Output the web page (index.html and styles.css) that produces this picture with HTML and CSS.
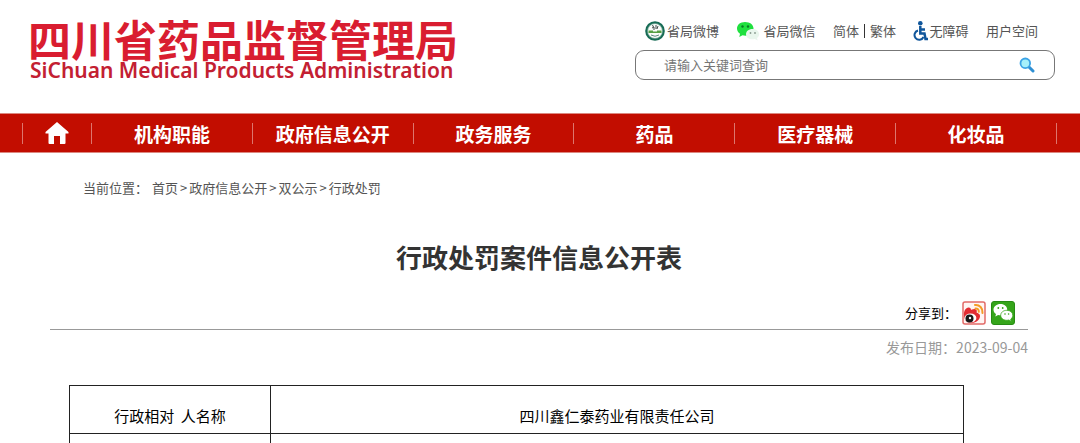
FILE: index.html
```html
<!DOCTYPE html>
<html lang="zh-CN">
<head>
<meta charset="utf-8">
<meta name="viewport" content="width=device-width, initial-scale=1">
<title>行政处罚案件信息公开表</title>
<link rel="stylesheet" href="styles.css">
</head>
<body>
<header class="header">
  <a class="brand" href="#">
    <span class="brand-cn">四川省药品监督管理局</span>
    <span class="brand-en">SiChuan Medical Products Administration</span>
  </a>
  <div class="tools">
    <div class="links">
      <a class="link weibo" href="#">
        <svg width="20" height="20" viewBox="0 0 20 20" aria-hidden="true"><circle cx="10" cy="10" r="9.8" fill="#176b55"/><circle cx="10" cy="10" r="7.8" fill="#86b5a5"/><circle cx="10" cy="10" r="7" fill="#fbfdfb"/><path d="M7 4.500l2 1M7 7l2-1v3M11 4v4M13 5l-1 3" stroke="#414b4a" fill="none"/><path d="M3.500 9.500h4.500v1h4v-1h4.500v2.500H3.500z" fill="#56a044"/><path d="M6 14q4 2.500 8 0" stroke="#5e8a80" fill="none"/></svg>
        <span>省局微博</span>
      </a>
      <a class="link wechat" href="#">
        <svg width="24" height="20" viewBox="0 0 24 20" aria-hidden="true"><path d="M9 1C4.300 1 1 3.800 1 7.500c0 2.300 1.200 4 3 5.200L3.300 16l3.200-1.800q2.500.7 4.500.3c3.800-.7 6.500-3.600 6.500-7C17.500 3.800 14 1 9 1z" fill="#1fe03f"/><path d="M16.500 8c-3.900 0-6.500 2.300-6.500 5.200s2.800 5.100 6.500 5.100q1.200 0 2.400-.4l2.800 1.500-.7-2.500c1.400-1 2.200-2.300 2.200-3.700 0-2.900-2.900-5.200-6.700-5.200z" fill="#e9f6ed"/><circle cx="6.500" cy="5.500" r="1.200" fill="#087a22"/><circle cx="12" cy="5.500" r="1.200" fill="#087a22"/><circle cx="14.500" cy="12" r=".9" fill="#8a9b90"/><circle cx="19" cy="12" r=".9" fill="#8a9b90"/></svg>
        <span>省局微信</span>
      </a>
      <span class="scripts"><a href="#">简体</a><span class="bar"></span><a href="#">繁体</a></span>
      <a class="link access" href="#">
        <svg width="15" height="20" viewBox="0 0 15 20" aria-hidden="true"><circle cx="7.300" cy="2.300" r="2.300" fill="#10569b"/><path d="M7.300 5v7.500h4.200l1 5.500H15M7.500 8.500h4.500" fill="none" stroke="#10569b" stroke-width="2.500"/><path d="M5 9.500a4.700 4.700 0 1 0 5.500 6.500" fill="none" stroke="#10569b" stroke-width="2"/></svg>
        <span>无障碍</span>
      </a>
      <a class="link" href="#">用户空间</a>
    </div>
    <form class="search">
      <input class="search-input" type="text" placeholder="请输入关键词查询" aria-label="请输入关键词查询">
      <button class="search-button" type="button" aria-label="查询">
        <svg width="16" height="16" viewBox="0 0 16 16" aria-hidden="true"><path d="M9.500 9.500l4.500 4.500" stroke="#2e8fd3" stroke-width="3" stroke-linecap="round"/><circle cx="6.300" cy="6.300" r="4.800" fill="#a5f0fa" stroke="#3aa3e6" stroke-width="1.800"/></svg>
      </button>
    </form>
  </div>
</header>

<nav class="nav">
  <ul class="nav-list">
    <li class="nav-home"><a href="#" aria-label="首页"><svg width="24" height="22" viewBox="0 0 24 22" aria-hidden="true"><path d="M12 0L.5 10v1.500h3V21q0 1 1 1H9v-8h6v8h4.500q1 0 1-1v-9.500h3V10z" fill="#fff"/></svg></a></li>
    <li><a href="#">机构职能</a></li>
    <li><a href="#">政府信息公开</a></li>
    <li><a href="#">政务服务</a></li>
    <li><a href="#">药品</a></li>
    <li><a href="#">医疗器械</a></li>
    <li><a href="#">化妆品</a></li>
  </ul>
</nav>

<main class="main">
  <div class="crumbs">
    <span class="crumbs-label">当前位置：</span>
    <a href="#">首页</a><span>&gt;</span><a href="#">政府信息公开</a><span>&gt;</span><a href="#">双公示</a><span>&gt;</span><a href="#">行政处罚</a>
  </div>
  <h1 class="title">行政处罚案件信息公开表</h1>
  <div class="share">
    <span>分享到：</span>
    <a href="#" aria-label="微博"><svg width="24" height="24" viewBox="0 0 24 24" aria-hidden="true"><rect x="1" y="1" width="22" height="22" rx="2" fill="#fff5f3" stroke="#e26b68" stroke-width="1.500"/><path d="M2 14c-.5-4 2-8 5-7.500 2 .3 2 2.500 2 2.500s4-2 5.500 0c.7 1 0 2.500 0 2.500s4 1 3.500 4C17.500 19.500 13.500 22 9 22c-4 0-7-3-7-8z" fill="#e22b31"/><ellipse cx="8.500" cy="17" rx="5.900" ry="4.500" fill="#fff"/><circle cx="7.500" cy="17.500" r="4" fill="#171717"/><circle cx="8" cy="17" r="1.200" fill="#fff"/><path d="M13 4c4.500-.5 8 3 7.500 8M13.500 7.500c2-.2 3.500 1.300 3.300 3.300" fill="none" stroke="#f49b25" stroke-width="2" stroke-linecap="round"/></svg></a>
    <a href="#" aria-label="微信"><svg width="24" height="24" viewBox="0 0 24 24" aria-hidden="true"><rect x=".5" y=".5" width="23" height="23" rx="2.500" fill="#35a51a" stroke="#278b14"/><path d="M9.500 3C5.500 3 2.500 5.500 2.500 8.700c0 1.700 1 3.300 2.500 4.300l-.7 2.500 2.800-1.500q2 .5 3.500.2c3.400-.5 5.600-2.800 5.600-5.500C16.200 5.500 13.500 3 9.500 3z" fill="#fff"/><path d="M15.800 9.300c-3.500 0-6.100 2.200-6.100 5s2.600 5 6.100 5q1 0 2-.3l2.500 1.400-.6-2.200c1.300-1 2.100-2.300 2.100-3.900 0-2.800-2.500-5-6-5z" fill="#fff" stroke="#35a51a" stroke-width=".8"/><g fill="#35a51a"><circle cx="7.300" cy="7" r=".9"/><circle cx="11.700" cy="7" r=".9"/><circle cx="14" cy="13" r=".8"/><circle cx="17.600" cy="13" r=".8"/></g></svg></a>
  </div>
  <p class="date">发布日期：2023-09-04</p>
  <table class="table">
    <tbody>
      <tr><th scope="row">行政相对&nbsp; 人名称</th><td>四川鑫仁泰药业有限责任公司</td></tr>
      <tr><th></th><td></td></tr>
    </tbody>
  </table>
</main>
</body>
</html>
```

FILE: styles.css
```css
* { box-sizing: border-box; }

body {
  margin: 0;
  background: #fff;
  color: #000;
  font: 13px/20px "Noto Sans CJK SC", "Noto Sans", sans-serif;
}

a { color: inherit; text-decoration: none; }
svg { display: block; flex: none; }

.header {
  display: flex;
  justify-content: space-between;
  align-items: flex-start;
  padding: 18px 25px 31px 28px;
}

.brand { display: flex; flex-direction: column; white-space: nowrap; }
.brand-cn { color: #d91d30; font-size: 43px; font-weight: 700; line-height: 40px; }
.brand-en { padding-left: 2px; color: #c32032; font: 600 21px/24px "Noto Sans", sans-serif; }

.tools { flex: 0 0 420px; padding-top: 2px; }
.links {
  display: flex;
  align-items: center;
  justify-content: space-between;
  height: 22px;
  margin-bottom: 8px;
  padding: 0 17px 0 10px;
  color: #555;
}
.link { display: flex; align-items: center; gap: 2px; }
.wechat { gap: 3px; }
.access { gap: 1px; }
.scripts { display: flex; align-items: center; gap: 5px; }
.bar { width: 1px; height: 14px; background: #333; }

.search {
  display: flex;
  align-items: center;
  height: 30px;
  padding: 0 19px 0 28px;
  border: 1px solid #777;
  border-radius: 9px;
}
.search-input {
  flex: 1;
  min-width: 0;
  padding: 0;
  border: 0;
  outline: 0;
  background: none;
  font: inherit;
}
.search-input::placeholder { color: #757575; opacity: 1; }
.search-button { padding: 0; border: 0; background: none; }

.nav {
  padding: 0 23px 0 22px;
  border-top: 1px solid #dc8880;
  border-bottom: 1px solid #dc8880;
  background: #c20d00;
}
.nav-list {
  display: flex;
  align-items: center;
  height: 38px;
  margin: 0;
  padding: 0;
  list-style: none;
  color: #fff;
  font-size: 19px;
  font-weight: 700;
}
.nav-list li {
  display: flex;
  flex: 1;
  justify-content: center;
  align-items: center;
  height: 21px;
  border-right: 1px solid #dd756d;
  line-height: 21px;
}
.nav-list .nav-home { flex: 0 0 70px; border-left: 1px solid #dd756d; }

.main { padding: 25px 52px 0 50px; }
.crumbs { display: flex; gap: 2px; padding-left: 33px; color: #555; }
.crumbs-label { margin-right: 2px; }

.title {
  margin: 39px 0 24px;
  color: #333;
  font-size: 26px;
  font-weight: 700;
  line-height: 40px;
  text-align: center;
}

.share {
  display: flex;
  justify-content: flex-end;
  align-items: center;
  gap: 5px;
  padding: 0 13px 4px 0;
  border-bottom: 1px solid #999;
}
.date { margin: 7px 0 28px; color: #999; font-size: 14px; text-align: right; }

.table {
  width: calc(100% - 83px);
  margin-left: 19px;
  border-collapse: collapse;
  table-layout: fixed;
  font-size: 15px;
}
.table th,
.table td {
  height: 48px;
  padding: 18px 4px 5px;
  border: 1px solid #222;
  font-weight: 400;
  line-height: 24px;
  text-align: center;
}
.table th { width: 201px; }
```
